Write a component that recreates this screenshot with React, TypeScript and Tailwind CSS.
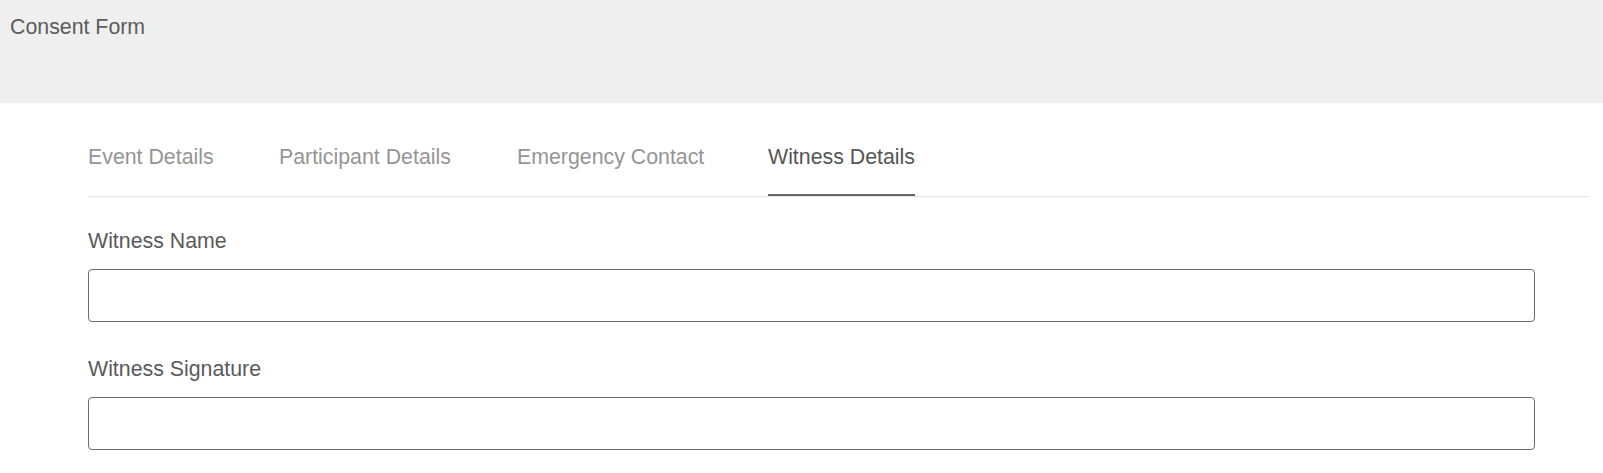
import React from "react";

const tabs = [
  { label: "Event Details", w: "w-[191px]" },
  { label: "Participant Details", w: "w-[238px]" },
  { label: "Emergency Contact", w: "w-[251px]" },
];

export default function App() {
  return (
    <div
      className="min-h-[473px] w-full bg-white text-[21.33px] leading-[32px]"
      style={{ fontFamily: '"Liberation Sans", Arial, sans-serif' }}
    >
      <header className="h-[103px] bg-[#efefef] px-[10px] pt-[11px] text-[#5c5c5c]">
        Consent Form
      </header>
      <div className="ml-[88px] w-[1501px]">
        <nav className="flex border-b border-[#e4e4e4]">
          {tabs.map((t) => (
            <div
              key={t.label}
              className={`${t.w} shrink-0 whitespace-nowrap pt-[38px] pb-[23px] text-[#959595]`}
            >
              {t.label}
            </div>
          ))}
          <div className="shrink-0 whitespace-nowrap border-b-2 border-[#666666] pt-[38px] pb-[21px] text-[#555555]">
            Witness Details
          </div>
        </nav>
        <div className="mt-[28px] flex w-[1447px] flex-col gap-[31px]">
          <div className="flex flex-col gap-[12px]">
            <label className="text-[#5a5a5a]">Witness Name</label>
            <input
              type="text"
              className="h-[53px] w-full rounded-[4px] border border-[#6b6b6b] bg-white px-3 outline-none"
            />
          </div>
          <div className="flex flex-col gap-[12px]">
            <label className="text-[#5a5a5a]">Witness Signature</label>
            <input
              type="text"
              className="h-[53px] w-full rounded-[4px] border border-[#6b6b6b] bg-white px-3 outline-none"
            />
          </div>
        </div>
      </div>
    </div>
  );
}
